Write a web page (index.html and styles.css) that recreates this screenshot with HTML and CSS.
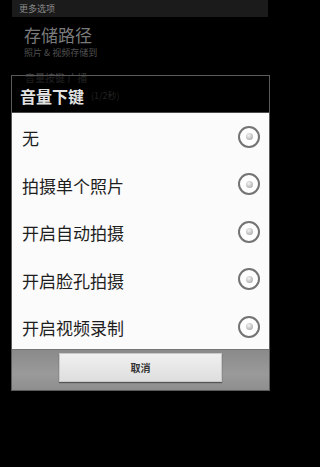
FILE: index.html
```html
<!DOCTYPE html>
<html lang="zh-CN">
<head>
<meta charset="utf-8">
<link rel="stylesheet" href="styles.css">
</head>
<body>
<div class="screen">
  <div class="topbar">更多选项</div>
  <div class="item">
    <div class="item-title">存储路径</div>
    <div class="item-sub">照片 &amp; 视频存储到</div>
  </div>
  <div class="item item2">
    <div class="ghost-title">音量按键 广播</div>
    <div class="ghost-sub">(1/2秒)</div>
  </div>

  <div class="dialog">
    <div class="dlg-title"><span class="dlg-text">音量下键</span></div>
    <div class="list">
      <div class="row"><span class="label">无</span><span class="radio"></span></div>
      <div class="row"><span class="label">拍摄单个照片</span><span class="radio"></span></div>
      <div class="row"><span class="label">开启自动拍摄</span><span class="radio"></span></div>
      <div class="row"><span class="label">开启脸孔拍摄</span><span class="radio"></span></div>
      <div class="row"><span class="label">开启视频录制</span><span class="radio"></span></div>
    </div>
    <div class="buttons"><div class="btn">取消</div></div>
  </div>
</div>
</body>
</html>
```

FILE: styles.css
```css
html, body {
  margin: 0;
  padding: 0;
  background: #000;
}
body {
  font-family: "Noto Sans CJK SC", "Noto Sans", sans-serif;
  width: 280px;
  height: 467px;
  overflow: hidden;
}
.screen {
  position: relative;
  width: 280px;
  height: 467px;
  background: #000;
}
.topbar {
  margin: 0 12px;
  height: 17px;
  line-height: 17px;
  background: #1b1b1b;
  color: #8a8a8a;
  font-size: 9px;
  padding-left: 7px;
}
.item {
  padding-left: 24px;
  padding-top: 7px;
}
.item-title {
  font-size: 17px;
  line-height: 22px;
  color: #7a7a7a;
}
.item-sub {
  font-size: 9px;
  line-height: 12px;
  color: #505050;
  margin-top: 1px;
}
.item2 {
  padding-top: 13px;
  padding-left: 25px;
}
.ghost-title {
  font-size: 10px;
  line-height: 11px;
  color: #444;
}
.ghost-sub {
  font-size: 9px;
  line-height: 10px;
  color: #444;
  padding-left: 66px;
  margin-top: 8px;
}
.dialog {
  position: absolute;
  left: 11px;
  top: 75px;
  width: 257px;
  border: 1px solid #5a5a5a;
}
.dlg-title {
  height: 37px;
  display: flex;
  align-items: center;
  background: rgba(0, 0, 0, 0.5);
  padding-left: 8px;
  padding-top: 4px;
  box-sizing: border-box;
  border-bottom: 1px solid #4a4a4a;
}
.dlg-text {
  color: #e2e2e2;
  font-size: 16px;
  line-height: 17px;
  font-weight: bold;
}
.list {
  height: 236px;
  overflow: hidden;
  background: #fbfbfb;
}
.row {
  height: 47.5px;
  display: flex;
  align-items: center;
  justify-content: space-between;
  padding: 0 9px 0 10px;
}
.label {
  font-size: 17px;
  color: #1e1e1e;
  position: relative;
  top: 1px;
}
.radio {
  width: 18px;
  height: 18px;
  border: 2px solid #747474;
  border-radius: 50%;
  display: flex;
  align-items: center;
  justify-content: center;
  background: #fff;
}
.radio::after {
  content: "";
  width: 7px;
  height: 7px;
  border-radius: 50%;
  background: radial-gradient(circle at 40% 35%, #f4f4f4, #9a9a9a);
}
.buttons {
  height: 41px;
  background: linear-gradient(#8a8a8a, #9a9a9a 60%, #8e8e8e);
  border-top: 1px solid #777;
  display: flex;
  justify-content: center;
  padding-top: 3px;
  box-sizing: border-box;
}
.btn {
  width: 163px;
  height: 29px;
  background: linear-gradient(#f0f0f0, #dedede);
  border: 1px solid #c8c8c8;
  box-sizing: border-box;
  box-shadow: 0 1px 1px #555;
  text-align: center;
  line-height: 27px;
  font-size: 10px;
  font-weight: bold;
  color: #333;
}
```
